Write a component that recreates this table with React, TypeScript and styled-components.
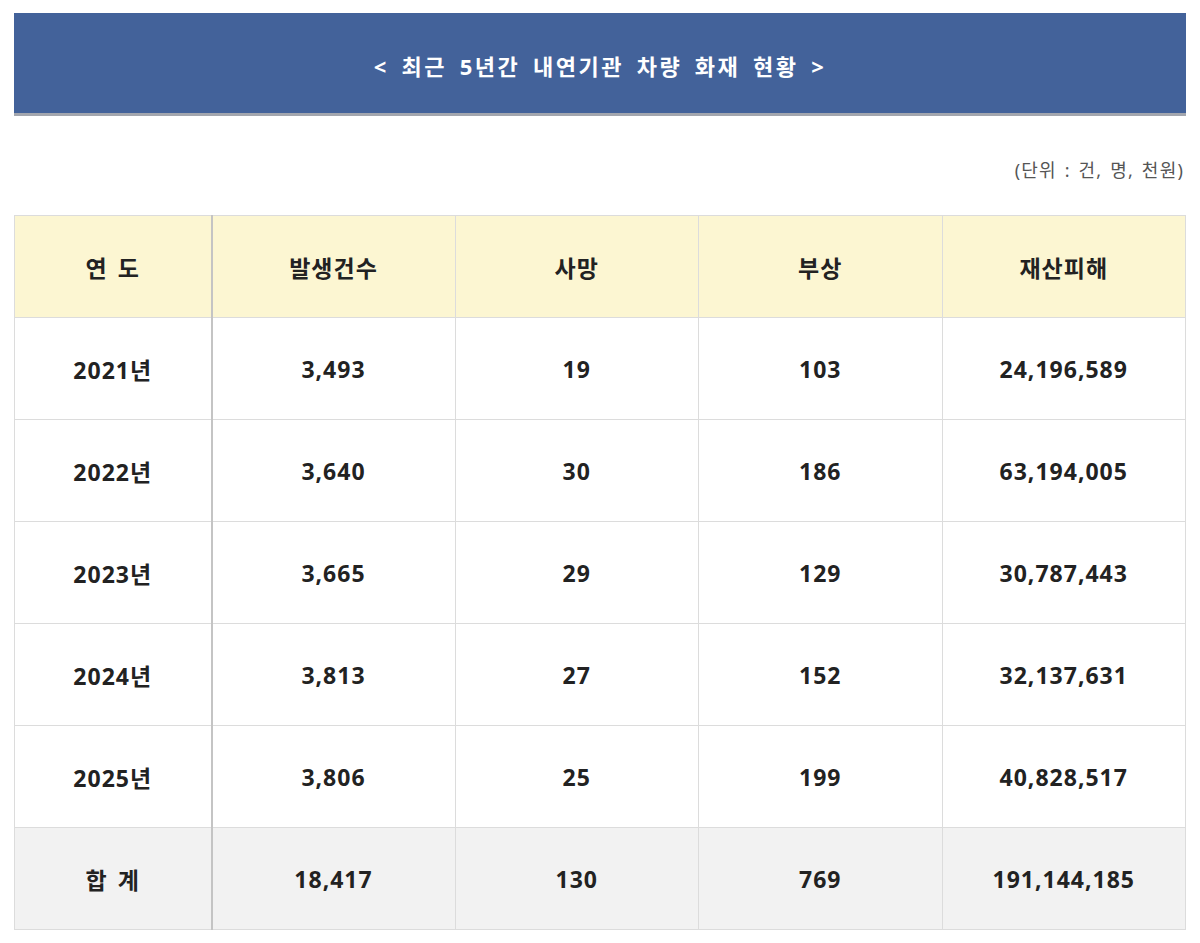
import React from "react";
import styled, { createGlobalStyle } from "styled-components";

const GlobalStyle = createGlobalStyle`
  html, body {
    margin: 0;
    padding: 0;
    background: #ffffff;
    font-family: "Noto Sans", "Noto Sans CJK KR", sans-serif;
  }
`;

const Page = styled.div`
  padding: 13px 14px 0 14px;
`;

const Banner = styled.div`
  box-sizing: border-box;
  height: 103px;
  padding-top: 4px;
  background: #43629a;
  border-bottom: 3px solid #a3a6ae;
  display: flex;
  align-items: center;
  justify-content: center;
  color: #ffffff;
  font-size: 22px;
  font-weight: 700;
  letter-spacing: 2.5px;
  word-spacing: 4.5px;
`;

const Unit = styled.div`
  margin-top: 40px;
  height: 30px;
  text-align: right;
  padding-right: 2px;
  color: #555555;
  font-size: 18px;
  letter-spacing: 1.2px;
  word-spacing: 2px;
`;

const Table = styled.table`
  margin-top: 29px;
  width: 100%;
  border-collapse: collapse;
  table-layout: fixed;
`;

const Cell = styled.td<{ $head?: boolean; $total?: boolean; $first?: boolean }>`
  height: 101px;
  padding: 0;
  border: 1px solid #dcdcdc;
  border-right: ${(p) => (p.$first ? "2px solid #c4c4c4" : "1px solid #dcdcdc")};
  background: ${(p) => (p.$head ? "#fcf6d2" : p.$total ? "#f2f2f2" : "#ffffff")};
  text-align: center;
  vertical-align: middle;
  color: #222222;
  font-size: 23px;
  font-weight: 700;
  letter-spacing: 1px;
  word-spacing: 3px;
`;

const headers = ["연 도", "발생건수", "사망", "부상", "재산피해"];

const rows = [
  ["2021년", "3,493", "19", "103", "24,196,589"],
  ["2022년", "3,640", "30", "186", "63,194,005"],
  ["2023년", "3,665", "29", "129", "30,787,443"],
  ["2024년", "3,813", "27", "152", "32,137,631"],
  ["2025년", "3,806", "25", "199", "40,828,517"],
];

const total = ["합 계", "18,417", "130", "769", "191,144,185"];

export default function App() {
  return (
    <>
      <GlobalStyle />
      <Page>
        <Banner>&lt; 최근 5년간 내연기관 차량 화재 현황 &gt;</Banner>
        <Unit>(단위 : 건, 명, 천원)</Unit>
        <Table>
          <colgroup>
            <col style={{ width: "197px" }} />
            <col />
            <col />
            <col />
            <col />
          </colgroup>
          <thead>
            <tr>
              {headers.map((h, i) => (
                <Cell as="th" key={h} $head $first={i === 0}>
                  {h}
                </Cell>
              ))}
            </tr>
          </thead>
          <tbody>
            {rows.map((r) => (
              <tr key={r[0]}>
                {r.map((v, i) => (
                  <Cell key={i} $first={i === 0}>
                    {v}
                  </Cell>
                ))}
              </tr>
            ))}
            <tr>
              {total.map((v, i) => (
                <Cell key={i} $total $first={i === 0}>
                  {v}
                </Cell>
              ))}
            </tr>
          </tbody>
        </Table>
      </Page>
    </>
  );
}
